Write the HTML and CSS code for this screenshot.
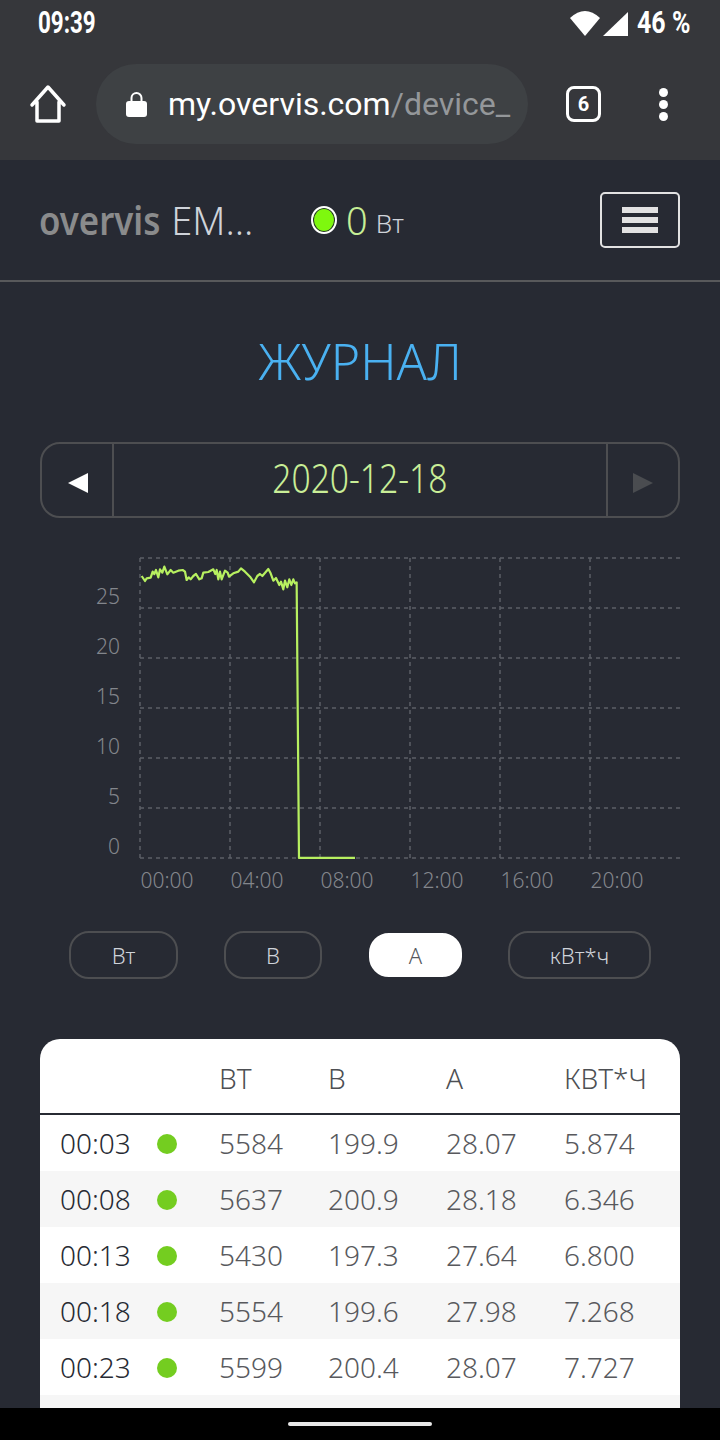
FILE: index.html
```html
<!DOCTYPE html>
<html lang="ru">
<head>
<meta charset="UTF-8" />
<meta name="viewport" content="width=device-width, initial-scale=1.0"/>
<title>Журнал</title>
<link rel="stylesheet" href="styles.css">
</head>
<body>
<div class="browser">
  <div class="status-bar">
    <span class="clock">09:39</span>
    <div class="status-right">
      <svg class="status-icon" width="60" height="28" viewBox="0 0 60 28">
        <path d="M0 9 Q15 -5 30 9 L15 27 Z" fill="#fff"/>
        <path d="M33 27 L58 27 L58 3 Z" fill="#fff"/>
      </svg>
      <span class="battery">46 %</span>
    </div>
  </div>
  <div class="toolbar">
    <svg class="home-icon" width="40" height="40" viewBox="0 0 40 40">
      <path d="M4 21 L20 3 L36 21 M9 18 V37 H31 V18" fill="none" stroke="#fff" stroke-width="3.5" stroke-linejoin="round" stroke-linecap="round"/>
    </svg>
    <div class="url-bar">
      <svg width="21" height="28" viewBox="0 0 21 28">
        <path d="M5.5 12 V8 A5 5 0 0 1 15.5 8 V12" fill="none" stroke="#fff" stroke-width="2"/>
        <rect x="0" y="11" width="21" height="16" rx="3" fill="#fff"/>
      </svg>
      <span class="url"><span class="url-host">my.overvis.com</span>/device_</span>
    </div>
    <div class="tabs-count">6</div>
    <div class="menu-dots"><i></i><i></i><i></i></div>
  </div>
</div>

<header class="site-header">
  <div class="brand"><b>overvis</b> EM...</div>
  <div class="power">
    <span class="power-dot"></span>
    <span class="power-value">0</span>
    <span class="power-unit">Вт</span>
  </div>
  <button class="burger"><i></i><i></i><i></i></button>
</header>

<h1 class="title">ЖУРНАЛ</h1>

<div class="date-nav">
  <div class="date-arrow date-arrow-on"><svg width="20" height="20" viewBox="0 0 20 20"><path d="M0 10 L20 0 V20 Z" fill="#fff"/></svg></div>
  <div class="date-value"><span>2020-12-18</span></div>
  <div class="date-arrow date-arrow-off"><svg width="20" height="20" viewBox="0 0 20 20"><path d="M20 10 L0 0 V20 Z" fill="#4a4c50"/></svg></div>
</div>

<svg class="chart" width="720" height="360" viewBox="0 540 720 360">
  <g class="grid">
    <path d="M140 558H680M140 608H680M140 658H680M140 708H680M140 758H680M140 808H680M140 858H680"/>
    <path d="M140 558V858M230 558V858M320 558V858M410 558V858M500 558V858M590 558V858"/>
  </g>
  <g class="axis axis-y">
    <text x="120" y="604">25</text>
    <text x="120" y="654">20</text>
    <text x="120" y="704">15</text>
    <text x="120" y="754">10</text>
    <text x="120" y="804">5</text>
    <text x="120" y="854">0</text>
  </g>
  <g class="axis axis-x">
    <text x="167" y="888">00:00</text>
    <text x="257" y="888">04:00</text>
    <text x="347" y="888">08:00</text>
    <text x="437" y="888">12:00</text>
    <text x="527" y="888">16:00</text>
    <text x="617" y="888">20:00</text>
  </g>
  <g transform="translate(130 550) scale(0.3333)">
    <polyline class="line" points="35,78 45,93 50,85 62,83 68,65 73,72 78,60 85,82 90,58 97,68 103,50 112,73 122,60 130,68 145,62 158,60 165,65 170,90 176,82 182,88 190,78 198,72 208,88 215,85 220,68 235,66 250,58 256,72 260,60 265,88 270,65 275,88 285,62 293,68 297,80 310,70 325,65 333,55 345,65 360,80 372,97 382,78 390,72 397,78 415,57 422,70 430,92 438,84 448,105 453,95 460,118 465,92 472,112 478,88 484,105 490,88 495,100 500,97 507,924 675,924"/>
  </g>
</svg>

<div class="units">
  <button class="unit unit-w">Вт</button>
  <button class="unit unit-v">В</button>
  <button class="unit unit-a active">А</button>
  <button class="unit unit-k">кВт*ч</button>
</div>

<table class="log">
  <thead>
    <tr><th class="c-time"></th><th class="c-dot"></th><th class="c-w">Вт</th><th class="c-v">В</th><th class="c-a">А</th><th>кВт*ч</th></tr>
  </thead>
  <tbody>
    <tr><td class="time">00:03</td><td><span class="dot"></span></td><td>5584</td><td>199.9</td><td>28.07</td><td>5.874</td></tr>
    <tr><td class="time">00:08</td><td><span class="dot"></span></td><td>5637</td><td>200.9</td><td>28.18</td><td>6.346</td></tr>
    <tr><td class="time">00:13</td><td><span class="dot"></span></td><td>5430</td><td>197.3</td><td>27.64</td><td>6.800</td></tr>
    <tr><td class="time">00:18</td><td><span class="dot"></span></td><td>5554</td><td>199.6</td><td>27.98</td><td>7.268</td></tr>
    <tr><td class="time">00:23</td><td><span class="dot"></span></td><td>5599</td><td>200.4</td><td>28.07</td><td>7.727</td></tr>
    <tr><td colspan="6"></td></tr>
  </tbody>
</table>

<div class="nav-bar"><span class="nav-handle"></span></div>
</body>
</html>
```

FILE: styles.css
```css
html, body {
  margin: 0;
  height: 1440px;
  overflow: hidden;
}

body {
  background: #272a33;
  font-family: "Noto Sans", "Open Sans", sans-serif;
  font-weight: 300;
  color: #cfd3da;
}

.browser {
  background: #36373b;
  height: 160px;
}

.status-bar {
  height: 48px;
  display: flex;
  justify-content: space-between;
  align-items: center;
  padding: 0 30px 4px 38px;
  box-sizing: border-box;
  color: #fff;
  font-family: "Roboto", sans-serif;
  font-weight: 700;
  font-size: 32px;
}

.clock {
  display: inline-block;
  transform: scaleX(0.7);
  transform-origin: left center;
}

.status-right {
  display: flex;
  align-items: center;
}

.status-icon {
  margin-top: 2px;
  margin-right: -8px;
}

.battery {
  display: inline-block;
  transform: scaleX(0.78);
  transform-origin: right center;
}

.toolbar {
  height: 112px;
  display: flex;
  align-items: center;
  box-sizing: border-box;
  padding-left: 28px;
}

.home-icon {
  margin-right: 28px;
}

.url-bar {
  width: 432px;
  height: 80px;
  border-radius: 40px;
  background: #3e4144;
  display: flex;
  align-items: center;
  gap: 21px;
  padding-left: 30px;
  box-sizing: border-box;
  font-family: "Roboto", sans-serif;
  font-weight: 400;
  font-size: 32px;
  color: #94979a;
  white-space: nowrap;
}

.url-host {
  color: #fff;
}

.tabs-count {
  width: 29px;
  height: 30px;
  margin-left: 38px;
  border: 3px solid #fff;
  border-radius: 8px;
  display: flex;
  align-items: center;
  justify-content: center;
  font-family: "Roboto", sans-serif;
  font-weight: 700;
  font-size: 20px;
  color: #fff;
}

.menu-dots {
  margin-left: 58px;
  display: flex;
  flex-direction: column;
  gap: 3px;
}

.menu-dots i {
  display: block;
  width: 9px;
  height: 9px;
  border-radius: 50%;
  background: #fff;
}

.site-header {
  height: 122px;
  box-sizing: border-box;
  border-bottom: 2px solid #58595b;
  display: flex;
  align-items: center;
  padding: 0 39px 0 39px;
}

.brand {
  width: 272px;
  font-size: 38px;
  color: #cfd3da;
  white-space: nowrap;
  padding-bottom: 2px;
}

.brand b {
  display: inline-block;
  font-weight: 600;
  font-size: 40px;
  color: #8a8b8c;
  transform: scaleX(0.87);
  transform-origin: left center;
  margin-right: -17px;
}

.power {
  display: flex;
  align-items: center;
  flex: 1;
}

.power-dot {
  width: 22px;
  height: 24px;
  border-radius: 50%;
  background: #7ef80e;
  border: 2px solid #fff;
  box-shadow: inset 0 0 0 1px #272a33;
}

.power-value {
  margin-left: 9px;
  font-size: 38px;
  color: #c6ee96;
}

.power-unit {
  margin-left: 8px;
  margin-top: 6px;
  font-size: 26px;
}

.burger {
  width: 80px;
  height: 56px;
  margin-right: 1px;
  background: none;
  border: 2px solid #e2e2e2;
  border-radius: 5px;
  display: flex;
  flex-direction: column;
  align-items: center;
  justify-content: center;
  gap: 4px;
  padding: 0;
}

.burger i {
  display: block;
  width: 36px;
  height: 6px;
  background: #e2e2e2;
}

.title {
  margin: 43px 0 0;
  height: 117px;
  text-align: center;
  font-size: 50px;
  font-weight: 300;
  line-height: 72px;
  color: #4ab1f1;
}

.date-nav {
  margin: 0 40px;
  height: 76px;
  box-sizing: border-box;
  border: 2px solid #4d4e51;
  border-radius: 20px;
  display: flex;
}

.date-arrow {
  flex: none;
  display: flex;
  align-items: center;
  justify-content: center;
  padding-top: 6px;
  box-sizing: border-box;
}

.date-arrow-on {
  width: 70px;
  padding-left: 2px;
}

.date-arrow-off {
  width: 72px;
  border-left: 2px solid #4d4e51;
}

.date-value {
  flex: 1;
  border-left: 2px solid #4d4e51;
  text-align: center;
  font-size: 41px;
  line-height: 66px;
  color: #c9ee97;
}

.date-value span {
  display: inline-block;
  transform: scaleX(0.82);
}

.chart {
  display: block;
  margin-top: 22px;
}

.grid path {
  fill: none;
  stroke: #5c5f67;
  stroke-width: 1.5;
  stroke-dasharray: 4 4;
}

.axis text {
  font-size: 21px;
  fill: #83868c;
}

.axis-y text {
  text-anchor: end;
}

.axis-x text {
  text-anchor: middle;
}

.line {
  fill: none;
  stroke: #b7f060;
  stroke-width: 2.2;
  vector-effect: non-scaling-stroke;
  stroke-linejoin: round;
}

.units {
  display: flex;
  align-items: center;
  height: 48px;
  margin-top: 31px;
  padding-left: 69px;
}

.unit {
  height: 48px;
  box-sizing: border-box;
  border: 2px solid #4d4e51;
  border-radius: 20px;
  background: none;
  padding: 0;
  font-family: inherit;
  font-weight: 300;
  font-size: 22px;
  color: #cfd3da;
}

.unit-w { width: 109px; }
.unit-v { width: 98px; margin-left: 46px; }
.unit-a { width: 93px; margin-left: 47px; height: 44px; }
.unit-k { width: 143px; margin-left: 46px; }

.unit.active {
  background: #fff;
  border-color: #fff;
  color: #55575c;
}

.log {
  margin: 60px 40px 0;
  width: 640px;
  border-collapse: collapse;
  table-layout: fixed;
  background: #fff;
  border-radius: 20px 20px 0 0;
  overflow: hidden;
}

.log th {
  height: 75px;
  padding: 3px 0 0;
  box-sizing: border-box;
  text-align: left;
  text-transform: uppercase;
  font-weight: 300;
  font-size: 28px;
  color: #4d4f53;
  border-bottom: 2px solid #272a33;
}

.c-time { width: 107px; }
.c-dot { width: 72px; }
.c-w { width: 109px; }
.c-v { width: 118px; }
.c-a { width: 118px; }

.log td {
  height: 56px;
  padding: 0;
  font-size: 28px;
  color: #58595d;
  white-space: nowrap;
}

.log tbody tr:nth-child(even) {
  background: #f6f6f6;
}

.log .time {
  padding-left: 20px;
  color: #272a33;
}

.dot {
  display: block;
  width: 20px;
  height: 20px;
  margin: 1px 0 0 10px;
  border-radius: 50%;
  background: #74cd20;
}

.nav-bar {
  position: fixed;
  left: 0;
  right: 0;
  bottom: 0;
  height: 32px;
  background: #000;
  display: flex;
  justify-content: center;
  align-items: center;
}

.nav-handle {
  width: 144px;
  height: 4px;
  border-radius: 2px;
  background: #e8e8e8;
}
```
